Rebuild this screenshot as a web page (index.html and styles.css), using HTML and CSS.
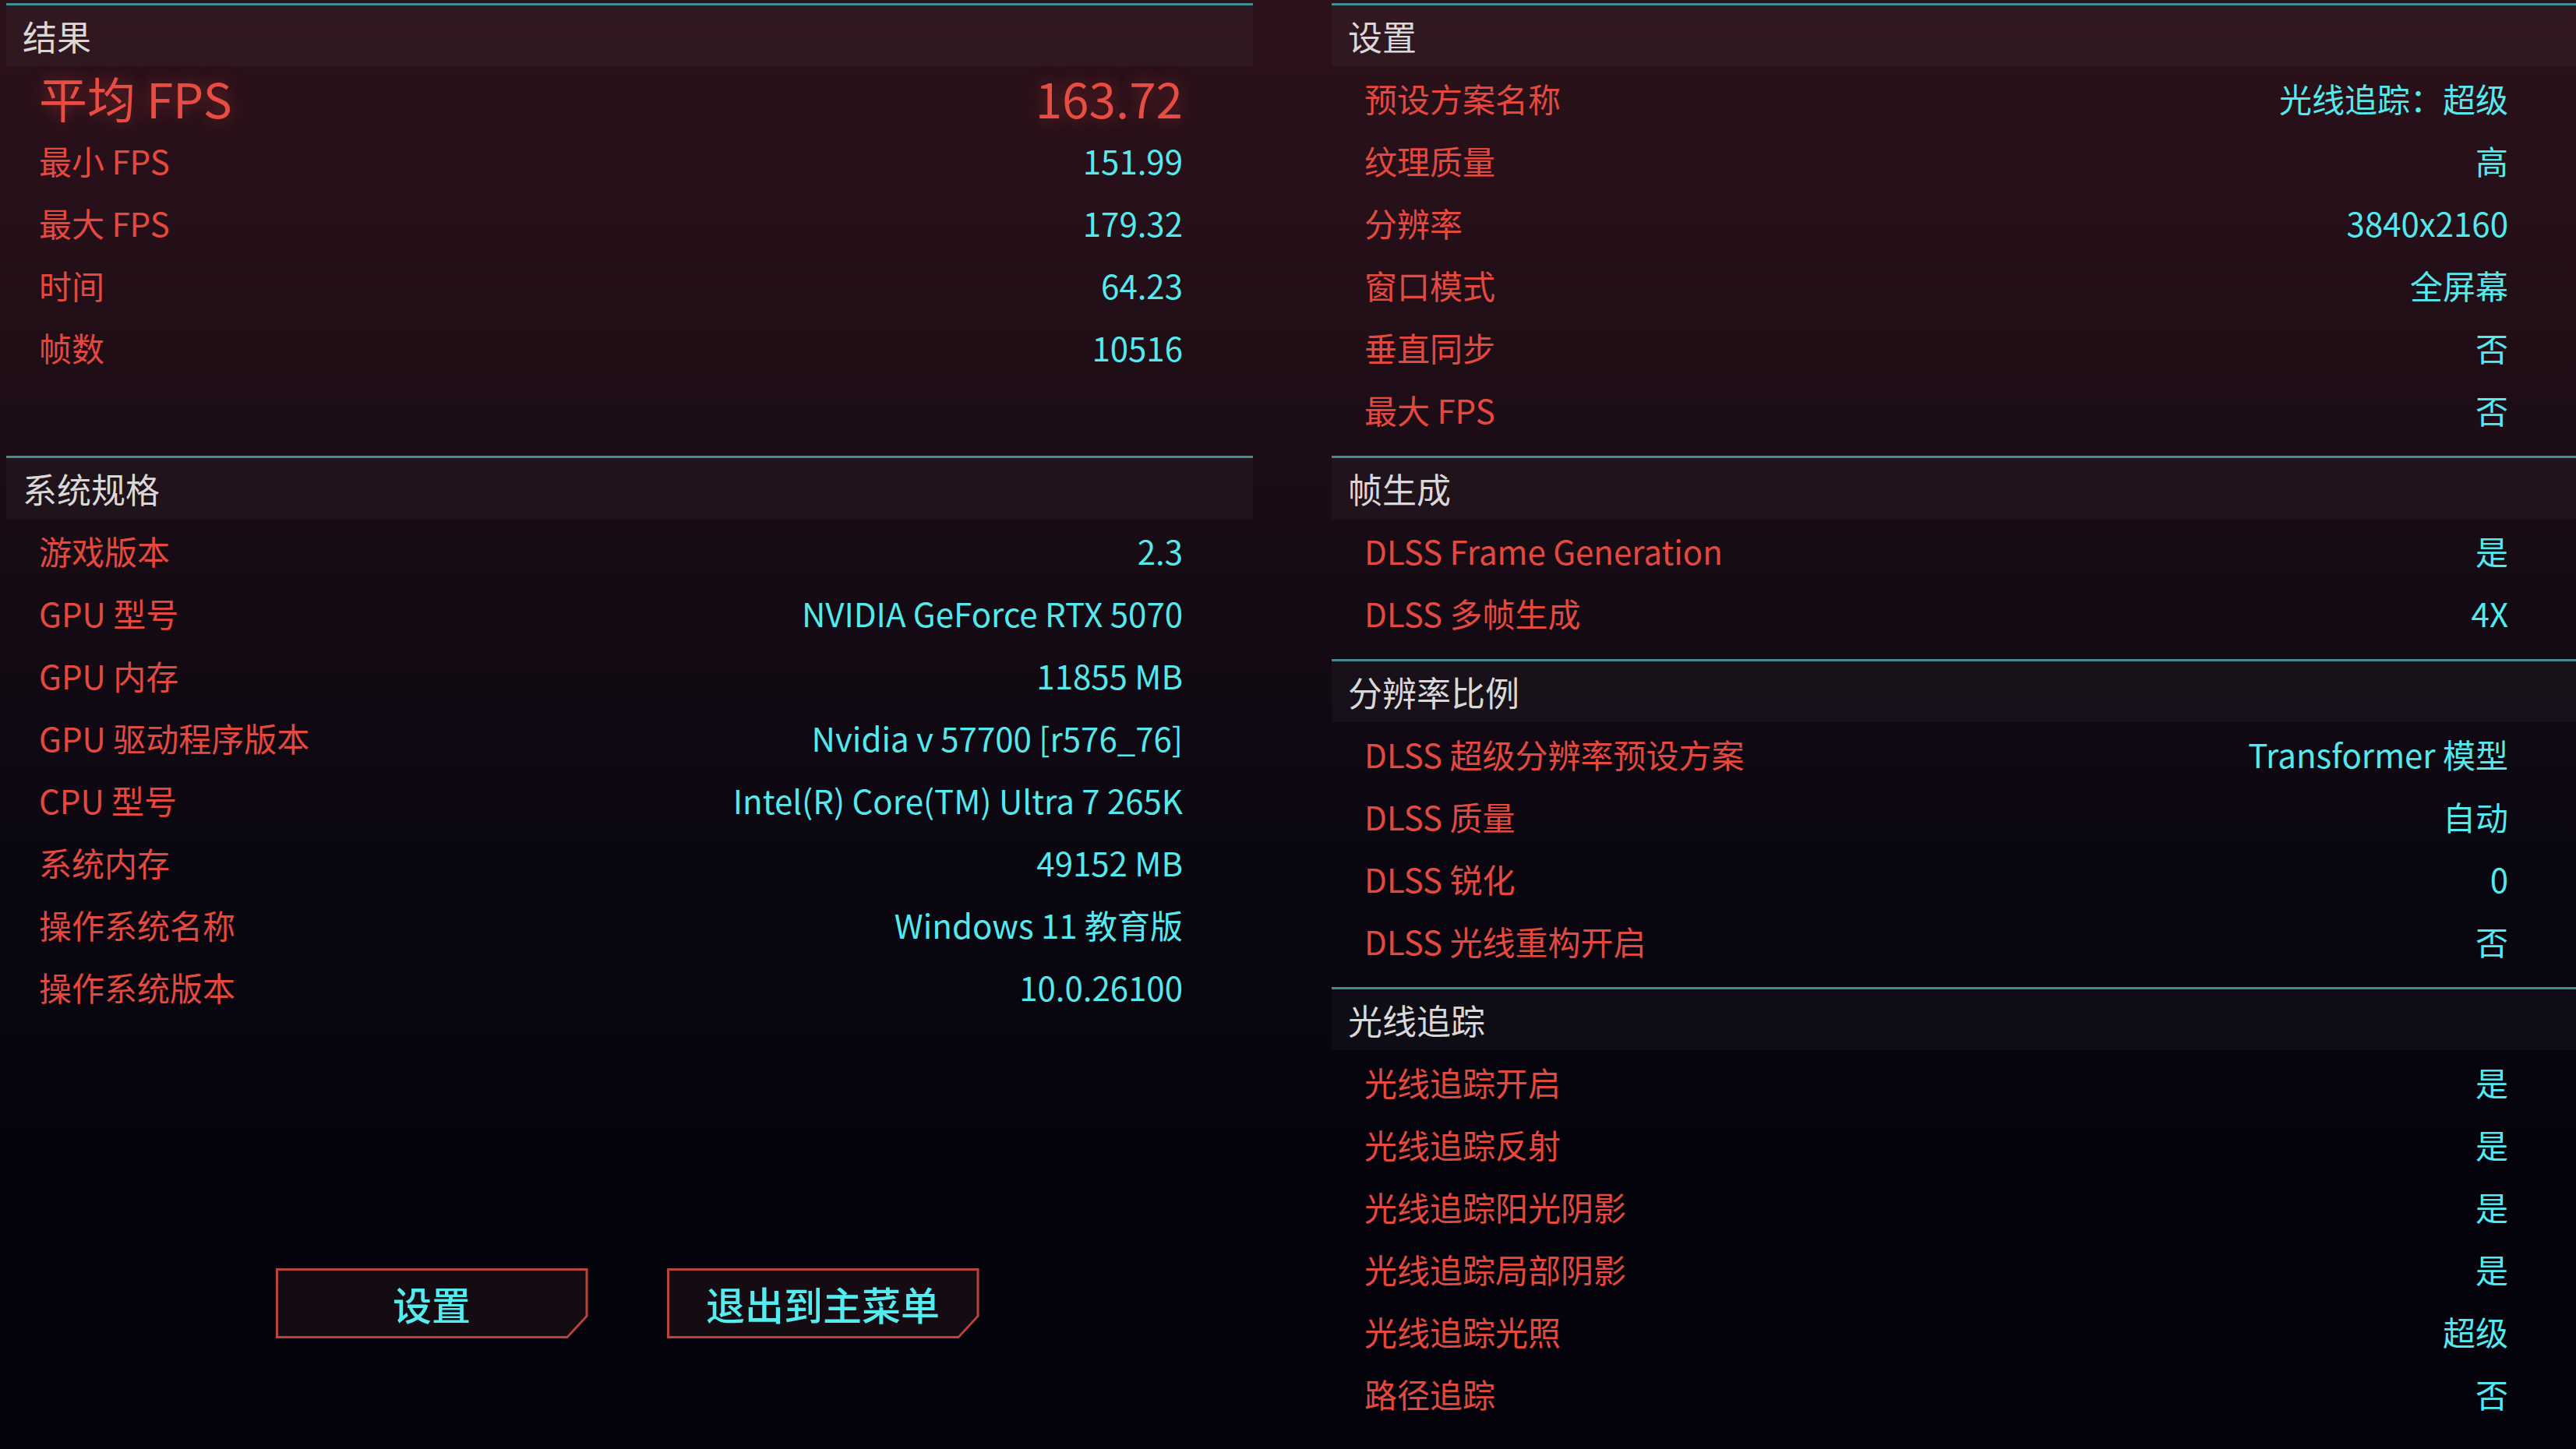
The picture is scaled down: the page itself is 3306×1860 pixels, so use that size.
FILE: index.html
```html
<!DOCTYPE html>
<html lang="zh-CN">
<head>
<meta charset="utf-8"/>
<title>基准测试结果</title>
<link rel="stylesheet" href="styles.css">
</head>
<body>
<div class="screen">

    <section class="panel results">
        <h2 class="panel-title">结果</h2>
        <div class="row row-main"><span class="label">平均 FPS</span><span class="value">163.72</span></div>
        <div class="row"><span class="label">最小 FPS</span><span class="value">151.99</span></div>
        <div class="row"><span class="label">最大 FPS</span><span class="value">179.32</span></div>
        <div class="row"><span class="label">时间</span><span class="value">64.23</span></div>
        <div class="row"><span class="label">帧数</span><span class="value">10516</span></div>
    </section>

    <section class="panel">
        <h2 class="panel-title">设置</h2>
        <div class="row"><span class="label">预设方案名称</span><span class="value">光线追踪：超级</span></div>
        <div class="row"><span class="label">纹理质量</span><span class="value">高</span></div>
        <div class="row"><span class="label">分辨率</span><span class="value">3840x2160</span></div>
        <div class="row"><span class="label">窗口模式</span><span class="value">全屏幕</span></div>
        <div class="row"><span class="label">垂直同步</span><span class="value">否</span></div>
        <div class="row"><span class="label">最大 FPS</span><span class="value">否</span></div>
    </section>

    <div class="col">
        <section class="panel">
            <h2 class="panel-title">系统规格</h2>
            <div class="row"><span class="label">游戏版本</span><span class="value">2.3</span></div>
            <div class="row"><span class="label">GPU 型号</span><span class="value">NVIDIA GeForce RTX 5070</span></div>
            <div class="row"><span class="label">GPU 内存</span><span class="value">11855 MB</span></div>
            <div class="row"><span class="label">GPU 驱动程序版本</span><span class="value">Nvidia v 57700 [r576_76]</span></div>
            <div class="row"><span class="label">CPU 型号</span><span class="value">Intel(R) Core(TM) Ultra 7 265K</span></div>
            <div class="row"><span class="label">系统内存</span><span class="value">49152 MB</span></div>
            <div class="row"><span class="label">操作系统名称</span><span class="value">Windows 11 教育版</span></div>
            <div class="row"><span class="label">操作系统版本</span><span class="value">10.0.26100</span></div>
        </section>

        <div class="actions">
            <button class="btn"><span>设置</span></button>
            <button class="btn"><span>退出到主菜单</span></button>
        </div>
    </div>

    <div class="col">
        <section class="panel">
            <h2 class="panel-title">帧生成</h2>
            <div class="row"><span class="label">DLSS Frame Generation</span><span class="value">是</span></div>
            <div class="row"><span class="label">DLSS 多帧生成</span><span class="value">4X</span></div>
        </section>

        <section class="panel">
            <h2 class="panel-title">分辨率比例</h2>
            <div class="row"><span class="label">DLSS 超级分辨率预设方案</span><span class="value">Transformer 模型</span></div>
            <div class="row"><span class="label">DLSS 质量</span><span class="value">自动</span></div>
            <div class="row"><span class="label">DLSS 锐化</span><span class="value">0</span></div>
            <div class="row"><span class="label">DLSS 光线重构开启</span><span class="value">否</span></div>
        </section>

        <section class="panel">
            <h2 class="panel-title">光线追踪</h2>
            <div class="row"><span class="label">光线追踪开启</span><span class="value">是</span></div>
            <div class="row"><span class="label">光线追踪反射</span><span class="value">是</span></div>
            <div class="row"><span class="label">光线追踪阳光阴影</span><span class="value">是</span></div>
            <div class="row"><span class="label">光线追踪局部阴影</span><span class="value">是</span></div>
            <div class="row"><span class="label">光线追踪光照</span><span class="value">超级</span></div>
            <div class="row"><span class="label">路径追踪</span><span class="value">否</span></div>
        </section>
    </div>

</div>
</body>
</html>
```

FILE: styles.css
```css
html, body {
    margin: 0;
    height: 100%;
}
body {
    overflow: hidden;
    font-family: "Noto Sans CJK SC", sans-serif;
    background: linear-gradient(to bottom, #2b111a 0%, #240f18 18%, #170b14 38%, #0b0711 58%, #05040d 78%, #04030b 100%);
}
.screen {
    display: grid;
    grid-template-columns: 1600px 1600px;
    grid-template-rows: auto auto;
    column-gap: 101px;
    padding: 4px 0 0 8px;
}
.col {
    display: flex;
    flex-direction: column;
}
.panel {
    border-top: 3px solid #3d8e92;
    padding-bottom: 20px;
}
.panel-title {
    margin: 0;
    height: 78px;
    line-height: 78px;
    padding-left: 21px;
    font-size: 44px;
    font-weight: 400;
    color: #d8d8d8;
    background: rgba(255, 255, 255, 0.03);
}
.row {
    display: flex;
    justify-content: space-between;
    align-items: center;
    height: 80px;
    padding: 0 90px 0 42px;
    font-size: 42px;
}
.label {
    color: #e4493f;
}
.value {
    color: #55e9ee;
}
.row-main {
    font-size: 62px;
}
.row-main .label,
.row-main .value {
    color: #e84c43;
    text-shadow: 0 0 22px rgba(232, 76, 67, 0.45);
}
.actions {
    display: flex;
    justify-content: center;
    gap: 101px;
    padding: 302px 6px 0 0;
}
.btn {
    position: relative;
    width: 401px;
    height: 90px;
    border: 0;
    padding: 0;
    font-family: inherit;
    font-size: 50px;
    font-weight: 500;
    color: #55ecf0;
    background: #b9443b;
    clip-path: polygon(0 0, 100% 0, 100% calc(100% - 28px), calc(100% - 26px) 100%, 0 100%);
}
.btn::before {
    content: "";
    position: absolute;
    inset: 3px;
    background: #140b13;
    clip-path: polygon(0 0, 100% 0, 100% calc(100% - 26px), calc(100% - 24px) 100%, 0 100%);
}
.btn span {
    position: relative;
}
```
